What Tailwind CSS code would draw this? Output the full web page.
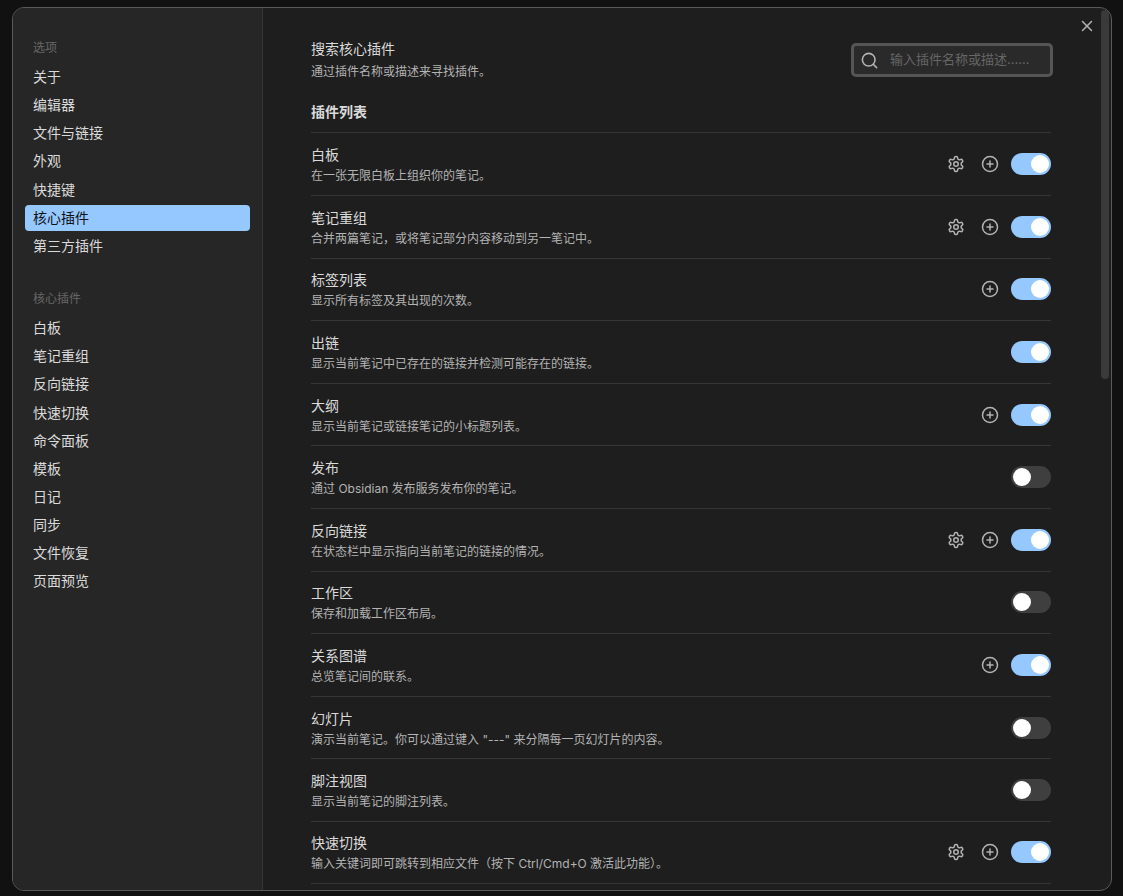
<!DOCTYPE html>
<html lang="zh-CN">
<head>
  <meta charset="UTF-8" />
  <title>选项</title>
  <script src="https://cdn.jsdelivr.net/npm/@tailwindcss/browser@4"></script>
</head>
<body class="bg-[#111111] h-[896px] overflow-hidden font-['Inter','Noto_Sans_CJK_SC',sans-serif]">
  <!-- shared icons -->
  <svg class="hidden">
    <symbol id="gear" viewBox="0 0 24 24" fill="none" stroke="currentColor" stroke-width="2" stroke-linecap="round" stroke-linejoin="round">
      <path d="M12.22 2h-.44a2 2 0 0 0-2 2v.18a2 2 0 0 1-1 1.73l-.43.25a2 2 0 0 1-2 0l-.15-.08a2 2 0 0 0-2.73.73l-.22.38a2 2 0 0 0 .73 2.73l.15.1a2 2 0 0 1 1 1.72v.51a2 2 0 0 1-1 1.74l-.15.09a2 2 0 0 0-.73 2.73l.22.38a2 2 0 0 0 2.73.73l.15-.08a2 2 0 0 1 2 0l.43.25a2 2 0 0 1 1 1.73V20a2 2 0 0 0 2 2h.44a2 2 0 0 0 2-2v-.18a2 2 0 0 1 1-1.73l.43-.25a2 2 0 0 1 2 0l.15.08a2 2 0 0 0 2.73-.73l.22-.39a2 2 0 0 0-.73-2.73l-.15-.08a2 2 0 0 1-1-1.74v-.5a2 2 0 0 1 1-1.74l.15-.09a2 2 0 0 0 .73-2.73l-.22-.38a2 2 0 0 0-2.73-.73l-.15.08a2 2 0 0 1-2 0l-.43-.25a2 2 0 0 1-1-1.73V4a2 2 0 0 0-2-2z"/>
      <circle cx="12" cy="12" r="3"/>
    </symbol>
    <symbol id="plus" viewBox="0 0 24 24" fill="none" stroke="currentColor" stroke-width="2" stroke-linecap="round" stroke-linejoin="round">
      <circle cx="12" cy="12" r="10"/><path d="M8 12h8"/><path d="M12 8v8"/>
    </symbol>
  </svg>

  <div class="relative flex ml-3 mt-[7px] w-[1100px] h-[884px] border border-[#5a5a5a] rounded-[12px] overflow-hidden bg-[#1e1e1e]">
    <!-- sidebar -->
    <aside class="w-[250px] shrink-0 bg-[#262626] border-r border-[#363636] pl-3 pr-3 pt-[28px] text-[14px] text-[#dadada]">
      <div class="h-[24px] pl-2 flex items-center text-[12px] text-[#666666]">选项</div>
      <div class="flex flex-col gap-[2.3px] mt-[4px]">
        <div class="h-[26px] pl-2 pb-[2px] flex items-center">关于</div>
        <div class="h-[26px] pl-2 pb-[2px] flex items-center">编辑器</div>
        <div class="h-[26px] pl-2 pb-[2px] flex items-center">文件与链接</div>
        <div class="h-[26px] pl-2 pb-[2px] flex items-center">外观</div>
        <div class="h-[26px] pl-2 pb-[2px] flex items-center">快捷键</div>
        <div class="h-[26px] pl-2 pb-[2px] flex items-center rounded-[4px] bg-[#94c8ff] text-[#111111]">核心插件</div>
        <div class="h-[26px] pl-2 pb-[2px] flex items-center">第三方插件</div>
      </div>
      <div class="h-[24px] pl-2 flex items-center text-[12px] text-[#666666] mt-[27px]">核心插件</div>
      <div class="flex flex-col gap-[2.1px] mt-[5px]">
        <div class="h-[26px] pl-2 pb-[2px] flex items-center">白板</div>
        <div class="h-[26px] pl-2 pb-[2px] flex items-center">笔记重组</div>
        <div class="h-[26px] pl-2 pb-[2px] flex items-center">反向链接</div>
        <div class="h-[26px] pl-2 pb-[2px] flex items-center">快速切换</div>
        <div class="h-[26px] pl-2 pb-[2px] flex items-center">命令面板</div>
        <div class="h-[26px] pl-2 pb-[2px] flex items-center">模板</div>
        <div class="h-[26px] pl-2 pb-[2px] flex items-center">日记</div>
        <div class="h-[26px] pl-2 pb-[2px] flex items-center">同步</div>
        <div class="h-[26px] pl-2 pb-[2px] flex items-center">文件恢复</div>
        <div class="h-[26px] pl-2 pb-[2px] flex items-center">页面预览</div>
      </div>
    </aside>

    <!-- plugin list -->
    <main class="w-[848px] shrink-0 pl-[48px] pr-[60px] pt-[31px] overflow-hidden">
      <div class="flex items-start justify-between">
        <div>
          <div class="text-[14px] leading-[20px] text-[#dadada]">搜索核心插件</div>
          <div class="text-[12px] leading-[18px] mt-[4px] text-[#b3b3b3]">通过插件名称或描述来寻找插件。</div>
        </div>
        <div class="flex items-center w-[202px] h-[34px] -mr-[2px] mt-[4px] rounded-[5px] border-[3px] border-[#555555] bg-[#2a2a2a] pl-[6px]">
          <svg class="w-[19px] h-[19px] text-[#b3b3b3]" viewBox="0 0 24 24" fill="none" stroke="currentColor" stroke-width="2" stroke-linecap="round" stroke-linejoin="round"><circle cx="11" cy="11" r="8"/><path d="m21 21-4.3-4.3"/></svg>
          <span class="ml-[11px] text-[13px] text-[#666666]">输入插件名称或描述......</span>
        </div>
      </div>
      <div class="mt-[21px] mb-[10.4px] text-[14px] leading-[20px] font-bold text-[#dadada]">插件列表</div>

      <div class="flex flex-col">
        <div class="h-[62.6px] border-t border-[#363636] flex items-center justify-between">
          <div class="pt-[2px]"><div class="text-[14px] leading-[20px] text-[#dadada]">白板</div><div class="text-[12px] leading-[18px] mt-[2px] text-[#b3b3b3]">在一张无限白板上组织你的笔记。</div></div>
          <div class="flex items-center text-[#b3b3b3]">
            <svg class="w-[18px] h-[18px] mr-[16px]"><use href="#gear"/></svg>
            <svg class="w-[18px] h-[18px] mr-[12px]"><use href="#plus"/></svg>
            <div class="w-[40px] h-[22px] rounded-full bg-[#94c8ff] flex items-center justify-end pr-[2px]"><div class="w-[18px] h-[18px] rounded-full bg-white"></div></div>
          </div>
        </div>
        <div class="h-[62.6px] border-t border-[#363636] flex items-center justify-between">
          <div class="pt-[2px]"><div class="text-[14px] leading-[20px] text-[#dadada]">笔记重组</div><div class="text-[12px] leading-[18px] mt-[2px] text-[#b3b3b3]">合并两篇笔记，或将笔记部分内容移动到另一笔记中。</div></div>
          <div class="flex items-center text-[#b3b3b3]">
            <svg class="w-[18px] h-[18px] mr-[16px]"><use href="#gear"/></svg>
            <svg class="w-[18px] h-[18px] mr-[12px]"><use href="#plus"/></svg>
            <div class="w-[40px] h-[22px] rounded-full bg-[#94c8ff] flex items-center justify-end pr-[2px]"><div class="w-[18px] h-[18px] rounded-full bg-white"></div></div>
          </div>
        </div>
        <div class="h-[62.6px] border-t border-[#363636] flex items-center justify-between">
          <div class="pt-[2px]"><div class="text-[14px] leading-[20px] text-[#dadada]">标签列表</div><div class="text-[12px] leading-[18px] mt-[2px] text-[#b3b3b3]">显示所有标签及其出现的次数。</div></div>
          <div class="flex items-center text-[#b3b3b3]">
            <svg class="w-[18px] h-[18px] mr-[12px]"><use href="#plus"/></svg>
            <div class="w-[40px] h-[22px] rounded-full bg-[#94c8ff] flex items-center justify-end pr-[2px]"><div class="w-[18px] h-[18px] rounded-full bg-white"></div></div>
          </div>
        </div>
        <div class="h-[62.6px] border-t border-[#363636] flex items-center justify-between">
          <div class="pt-[2px]"><div class="text-[14px] leading-[20px] text-[#dadada]">出链</div><div class="text-[12px] leading-[18px] mt-[2px] text-[#b3b3b3]">显示当前笔记中已存在的链接并检测可能存在的链接。</div></div>
          <div class="flex items-center text-[#b3b3b3]">
            <div class="w-[40px] h-[22px] rounded-full bg-[#94c8ff] flex items-center justify-end pr-[2px]"><div class="w-[18px] h-[18px] rounded-full bg-white"></div></div>
          </div>
        </div>
        <div class="h-[62.6px] border-t border-[#363636] flex items-center justify-between">
          <div class="pt-[2px]"><div class="text-[14px] leading-[20px] text-[#dadada]">大纲</div><div class="text-[12px] leading-[18px] mt-[2px] text-[#b3b3b3]">显示当前笔记或链接笔记的小标题列表。</div></div>
          <div class="flex items-center text-[#b3b3b3]">
            <svg class="w-[18px] h-[18px] mr-[12px]"><use href="#plus"/></svg>
            <div class="w-[40px] h-[22px] rounded-full bg-[#94c8ff] flex items-center justify-end pr-[2px]"><div class="w-[18px] h-[18px] rounded-full bg-white"></div></div>
          </div>
        </div>
        <div class="h-[62.6px] border-t border-[#363636] flex items-center justify-between">
          <div class="pt-[2px]"><div class="text-[14px] leading-[20px] text-[#dadada]">发布</div><div class="text-[12px] leading-[18px] mt-[2px] text-[#b3b3b3]">通过 Obsidian 发布服务发布你的笔记。</div></div>
          <div class="w-[40px] h-[22px] rounded-full bg-[#3f3f3f] flex items-center pl-[2px]"><div class="w-[18px] h-[18px] rounded-full bg-white"></div></div>
        </div>
        <div class="h-[62.6px] border-t border-[#363636] flex items-center justify-between">
          <div class="pt-[2px]"><div class="text-[14px] leading-[20px] text-[#dadada]">反向链接</div><div class="text-[12px] leading-[18px] mt-[2px] text-[#b3b3b3]">在状态栏中显示指向当前笔记的链接的情况。</div></div>
          <div class="flex items-center text-[#b3b3b3]">
            <svg class="w-[18px] h-[18px] mr-[16px]"><use href="#gear"/></svg>
            <svg class="w-[18px] h-[18px] mr-[12px]"><use href="#plus"/></svg>
            <div class="w-[40px] h-[22px] rounded-full bg-[#94c8ff] flex items-center justify-end pr-[2px]"><div class="w-[18px] h-[18px] rounded-full bg-white"></div></div>
          </div>
        </div>
        <div class="h-[62.6px] border-t border-[#363636] flex items-center justify-between">
          <div class="pt-[2px]"><div class="text-[14px] leading-[20px] text-[#dadada]">工作区</div><div class="text-[12px] leading-[18px] mt-[2px] text-[#b3b3b3]">保存和加载工作区布局。</div></div>
          <div class="w-[40px] h-[22px] rounded-full bg-[#3f3f3f] flex items-center pl-[2px]"><div class="w-[18px] h-[18px] rounded-full bg-white"></div></div>
        </div>
        <div class="h-[62.6px] border-t border-[#363636] flex items-center justify-between">
          <div class="pt-[2px]"><div class="text-[14px] leading-[20px] text-[#dadada]">关系图谱</div><div class="text-[12px] leading-[18px] mt-[2px] text-[#b3b3b3]">总览笔记间的联系。</div></div>
          <div class="flex items-center text-[#b3b3b3]">
            <svg class="w-[18px] h-[18px] mr-[12px]"><use href="#plus"/></svg>
            <div class="w-[40px] h-[22px] rounded-full bg-[#94c8ff] flex items-center justify-end pr-[2px]"><div class="w-[18px] h-[18px] rounded-full bg-white"></div></div>
          </div>
        </div>
        <div class="h-[62.6px] border-t border-[#363636] flex items-center justify-between">
          <div class="pt-[2px]"><div class="text-[14px] leading-[20px] text-[#dadada]">幻灯片</div><div class="text-[12px] leading-[18px] mt-[2px] text-[#b3b3b3]">演示当前笔记。你可以通过键入 "---" 来分隔每一页幻灯片的内容。</div></div>
          <div class="w-[40px] h-[22px] rounded-full bg-[#3f3f3f] flex items-center pl-[2px]"><div class="w-[18px] h-[18px] rounded-full bg-white"></div></div>
        </div>
        <div class="h-[62.6px] border-t border-[#363636] flex items-center justify-between">
          <div class="pt-[2px]"><div class="text-[14px] leading-[20px] text-[#dadada]">脚注视图</div><div class="text-[12px] leading-[18px] mt-[2px] text-[#b3b3b3]">显示当前笔记的脚注列表。</div></div>
          <div class="w-[40px] h-[22px] rounded-full bg-[#3f3f3f] flex items-center pl-[2px]"><div class="w-[18px] h-[18px] rounded-full bg-white"></div></div>
        </div>
        <div class="h-[62.6px] border-t border-b border-[#363636] flex items-center justify-between">
          <div class="pt-[2px]"><div class="text-[14px] leading-[20px] text-[#dadada]">快速切换</div><div class="text-[12px] leading-[18px] mt-[2px] text-[#b3b3b3]">输入关键词即可跳转到相应文件（按下 Ctrl/Cmd+O 激活此功能）。</div></div>
          <div class="flex items-center text-[#b3b3b3]">
            <svg class="w-[18px] h-[18px] mr-[16px]"><use href="#gear"/></svg>
            <svg class="w-[18px] h-[18px] mr-[12px]"><use href="#plus"/></svg>
            <div class="w-[40px] h-[22px] rounded-full bg-[#94c8ff] flex items-center justify-end pr-[2px]"><div class="w-[18px] h-[18px] rounded-full bg-white"></div></div>
          </div>
        </div>
      </div>
    </main>

    <!-- close button and scrollbar sit over the panel -->
    <svg class="absolute top-[9px] right-[15px] w-[18px] h-[18px] text-[#b3b3b3]" viewBox="0 0 24 24" fill="none" stroke="currentColor" stroke-width="2" stroke-linecap="round"><path d="M18 6 6 18"/><path d="m6 6 12 12"/></svg>
    <div class="absolute top-[2px] right-[2px] w-[8px] h-[369px] rounded-[4px] bg-[#3a3a3a]"></div>
  </div>
</body>
</html>
